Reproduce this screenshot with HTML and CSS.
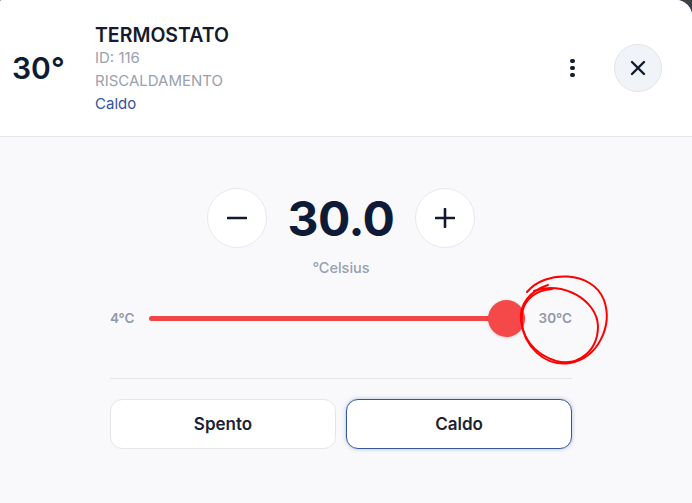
FILE: index.html
```html
<!DOCTYPE html>
<html lang="it">
<head>
    <meta charset="UTF-8">
    <meta name="viewport" content="width=device-width, initial-scale=1.0">
    <title>Termostato</title>
    <link rel="stylesheet" href="styles.css">
</head>
<body>
    <div class="modal">
        <!-- Intestazione dispositivo -->
        <header class="modal-header">
            <div class="current-temp">30°</div>
            <div class="device-info">
                <h1>TERMOSTATO</h1>
                <p class="muted">ID: 116</p>
                <p class="muted">RISCALDAMENTO</p>
                <p class="mode">Caldo</p>
            </div>
            <div class="header-actions">
                <button class="menu-btn" aria-label="Menu">
                    <span></span><span></span><span></span>
                </button>
                <button class="close-btn" aria-label="Chiudi">
                    <svg width="18" height="18" viewBox="0 0 18 18"><path d="M3 3 L15 15 M15 3 L3 15" stroke="#111a2e" stroke-width="2.4" stroke-linecap="round"/></svg>
                </button>
            </div>
        </header>

        <!-- Controlli -->
        <main class="modal-body">
            <div class="counter">
                <button class="round-btn" aria-label="Diminuisci">
                    <svg width="20" height="20" viewBox="0 0 20 20"><path d="M1 10 H19" stroke="#111a2e" stroke-width="2.6" stroke-linecap="round"/></svg>
                </button>
                <div class="value">30.0</div>
                <button class="round-btn" aria-label="Aumenta">
                    <svg width="20" height="20" viewBox="0 0 20 20"><path d="M1 10 H19 M10 1 V19" stroke="#111a2e" stroke-width="2.6" stroke-linecap="round"/></svg>
                </button>
            </div>
            <div class="unit">°Celsius</div>

            <div class="slider">
                <span class="slider-label">4°C</span>
                <div class="track">
                    <div class="thumb"></div>
                </div>
                <span class="slider-label">30°C</span>
            </div>

            <div class="divider"></div>

            <div class="modes">
                <button class="mode-btn">Spento</button>
                <button class="mode-btn active">Caldo</button>
            </div>
        </main>

        <!-- segno a mano sopra lo screenshot -->
        <svg class="scribble" width="692" height="503" viewBox="0 0 692 503">
            <path d="M527 292 C545 270, 592 270, 604 300 C613 326, 598 358, 570 363 C544 367, 524 346, 521 321 C519 304, 530 291, 548 285" />
            <path d="M534 291 C562 280, 597 300, 598 326 C598 351, 578 367, 556 361 C534 354, 519 336, 522 313 C525 298, 537 290, 552 289" />
        </svg>
    </div>
</body>
</html>
```

FILE: styles.css
```css
* {
    box-sizing: border-box;
    margin: 0;
    padding: 0;
}

body {
    font-family: Inter, "Noto Sans", sans-serif;
    background-color: #3d4148;
    width: 692px;
    height: 503px;
    overflow: hidden;
}

button {
    font-family: inherit;
    cursor: pointer;
}

.modal {
    position: relative;
    background-color: #f9f9fb;
    height: 503px;
    border-top-right-radius: 16px;
    border-top-left-radius: 2px;
    overflow: hidden;
}

.modal-header {
    display: flex;
    align-items: center;
    height: 137px;
    padding: 0 30px 0 12px;
    background-color: #ffffff;
    border-bottom: 1px solid #e3e5e9;
}

.current-temp {
    font-size: 30px;
    font-weight: 600;
    color: #0f1a33;
    width: 83px;
}

.device-info {
    flex: 1;
    padding-top: 2px;
}

.device-info h1 {
    font-size: 19.5px;
    font-weight: 600;
    color: #131b2e;
    line-height: 22px;
}

.device-info p {
    font-size: 15px;
    line-height: 23px;
}

.muted {
    color: #9aa1ad;
}

.mode {
    color: #31549a;
}

.header-actions {
    display: flex;
    align-items: center;
    gap: 35px;
}

.menu-btn {
    display: flex;
    flex-direction: column;
    gap: 2.6px;
    background: none;
    border: none;
    padding: 4px;
}

.menu-btn span {
    width: 4.6px;
    height: 4.6px;
    border-radius: 50%;
    background-color: #131b2e;
}

.close-btn {
    width: 48px;
    height: 48px;
    border-radius: 50%;
    background-color: #f0f3f8;
    border: 1px solid #e2e4e9;
    display: flex;
    align-items: center;
    justify-content: center;
}

.modal-body {
    width: 462px;
    margin-left: 110px;
    padding-top: 51px;
}

.counter {
    display: flex;
    align-items: center;
    justify-content: center;
    gap: 21px;
}

.round-btn {
    width: 60px;
    height: 60px;
    border-radius: 50%;
    background-color: #ffffff;
    border: 1px solid #e6e8ec;
    display: flex;
    align-items: center;
    justify-content: center;
}

.value {
    font-size: 48px;
    font-weight: 700;
    color: #0f1b36;
    letter-spacing: -0.5px;
}

.unit {
    text-align: center;
    font-size: 14.5px;
    font-weight: 500;
    color: #97a0b2;
    line-height: 20px;
    margin-top: 10px;
}

.slider {
    display: flex;
    align-items: center;
    gap: 14px;
    height: 36px;
    margin-top: 22px;
}

.slider-label {
    font-size: 13.5px;
    font-weight: 600;
    color: #8f98a8;
}

.track {
    position: relative;
    flex: 1;
    height: 5px;
    border-radius: 3px;
    background-color: #f04646;
}

.thumb {
    position: absolute;
    right: 0;
    top: -16px;
    width: 37px;
    height: 37px;
    border-radius: 50%;
    background-color: #f54848;
    box-shadow: 0 1px 3px rgba(0, 0, 0, 0.15);
}

.divider {
    height: 1px;
    background-color: #e1e3e8;
    margin-top: 42px;
}

.modes {
    display: flex;
    gap: 10px;
    margin-top: 20px;
}

.mode-btn {
    flex: 1;
    height: 50px;
    border-radius: 12px;
    background-color: #ffffff;
    border: 1px solid #e3e5ea;
    font-size: 17px;
    font-weight: 600;
    color: #1b2333;
}

.mode-btn.active {
    border-color: #3557a0;
    box-shadow: 0 0 4px rgba(53, 87, 160, 0.35);
}

.scribble {
    position: absolute;
    left: 0;
    top: 0;
    pointer-events: none;
}

.scribble path {
    fill: none;
    stroke: #ff0000;
    stroke-width: 2;
    stroke-linecap: round;
}
```
